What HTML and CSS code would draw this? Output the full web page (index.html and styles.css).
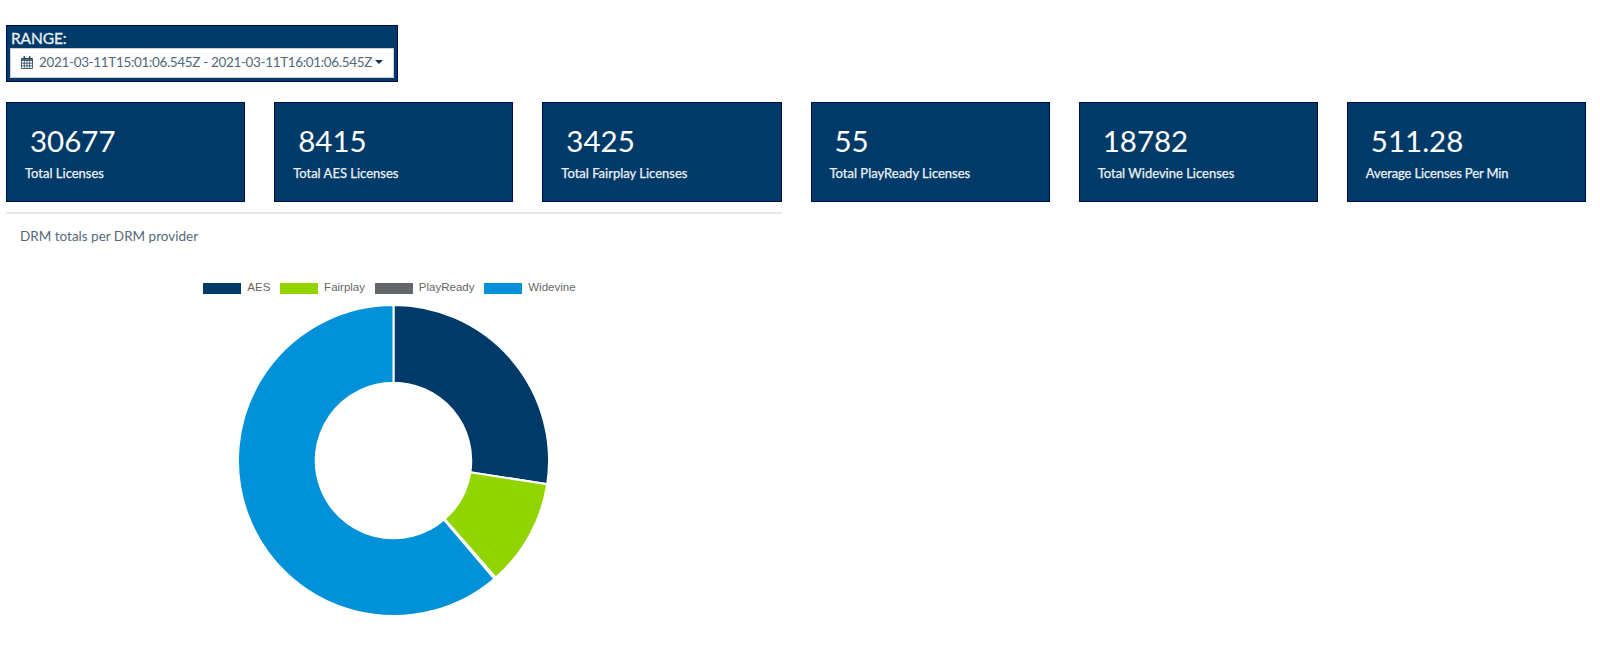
FILE: index.html
```html
<!DOCTYPE html>
<html lang="en">
<head>
<meta charset="utf-8">
<title>DRM licenses</title>
<link rel="stylesheet" href="styles.css">
</head>
<body>
<main class="dashboard">
  <section class="range">
    <label class="range-label">RANGE:</label>
    <div class="range-picker">
      <svg class="calendar" width="12" height="13" viewBox="0 0 12 13" fill="none" stroke="#24435c"><path d="M.5 2.5h11v10H.5zM.5 4.5h11M.5 7.2h11M.5 9.8h11M3.3 4.5v8M6 4.5v8M8.7 4.5v8" stroke-width=".8"/><path d="M.5 3h11" stroke-width="1.6"/><path d="M3.3 .3v3M8.7 .3v3" stroke-width="1.6"/></svg>
      <span class="range-text">2021-03-11T15:01:06.545Z - 2021-03-11T16:01:06.545Z</span>
      <span class="caret"></span>
    </div>
  </section>
  <section class="cards">
    <div class="card"><div class="value">30677</div><div class="label">Total Licenses</div></div>
    <div class="card"><div class="value">8415</div><div class="label">Total AES Licenses</div></div>
    <div class="card"><div class="value">3425</div><div class="label">Total Fairplay Licenses</div></div>
    <div class="card"><div class="value">55</div><div class="label">Total PlayReady Licenses</div></div>
    <div class="card"><div class="value">18782</div><div class="label">Total Widevine Licenses</div></div>
    <div class="card"><div class="value">511.28</div><div class="label tight">Average Licenses Per Min</div></div>
  </section>
  <section class="panel">
    <h2 class="panel-title">DRM totals per DRM provider</h2>
    <div class="legend">
      <span class="key"><i class="swatch aes"></i><span class="key-text">AES</span></span>
      <span class="key"><i class="swatch fairplay"></i><span class="key-text">Fairplay</span></span>
      <span class="key"><i class="swatch playready"></i><span class="key-text">PlayReady</span></span>
      <span class="key"><i class="swatch widevine"></i><span class="key-text">Widevine</span></span>
    </div>
    <svg class="donut" width="313" height="313" viewBox="-157 -157 314 314" stroke="#fff" stroke-width="2">
      <path fill="#003a69" d="M0-156A156 156 0 0 1 154.18 23.73L77.09 11.87A78 78 0 0 0 0-78Z"/>
      <path fill="#92d400" d="M154.18 23.73A156 156 0 0 1 102.47 117.63L51.23 58.81A78 78 0 0 0 77.09 11.87Z"/>
      <path fill="#63666a" d="M102.47 117.63A156 156 0 0 1 101.13 118.78L50.56 59.39A78 78 0 0 0 51.23 58.81Z"/>
      <path fill="#0091d8" d="M101.13 118.78A156 156 0 1 1 0-156L0-78A78 78 0 1 0 50.56 59.39Z"/>
    </svg>
  </section>
</main>
</body>
</html>
```
FILE: styles.css
```css
* { box-sizing: border-box; }
body { margin: 0; background: #fff; font-family: Lato, "Open Sans", sans-serif; }
.dashboard { padding: 25px 14px 0 6px; }
.range { width: 392px; height: 57px; padding: 3px 3px 0; background: #003a69; border: 1px solid #00094f; }
.range-label { display: block; height: 19px; padding-left: 1px; font-size: 15.5px; line-height: 18px; color: #e9eef2; -webkit-text-stroke: .3px #e9eef2; letter-spacing: -.1px; }
.range-picker { display: flex; align-items: center; width: 384px; height: 30px; padding: 0 10px; border: 1px solid #ccc; background: #fff; }
.calendar { flex: none; margin-top: -2px; }
.range-text { width: 336px; margin: -3px 0 0 6px; font-size: 13.5px; line-height: 20px; letter-spacing: -.34px; color: #53687a; white-space: nowrap; }
.caret { margin-top: -3px; border: 4px solid transparent; border-top-color: #12324e; border-bottom: 0; }
.cards { display: grid; grid-template-columns: repeat(6, 1fr); column-gap: 29px; margin-top: 20px; }
.card { height: 100px; padding: 19px 0 0 18px; background: #003a69; border: 1px solid #00094f; color: #fff; }
.value { padding-left: 5px; font-size: 29.5px; line-height: 38px; }
.label { margin-top: 4px; font-size: 13px; line-height: 18px; color: #edf1f4; -webkit-text-stroke: .25px #edf1f4; white-space: nowrap; }
.tight { letter-spacing: -.12px; }
.panel { display: flex; flex-direction: column; width: 776px; margin-top: 10px; border-top: 2px solid #e6e9ec; }
.panel-title { margin: 12px 0 0 14px; font-size: 13.5px; line-height: 20px; font-weight: 400; color: #53687a; }
.legend { display: flex; gap: 9.5px; margin: 34px 0 0 197px; font: 11.5px/14px "Liberation Sans", Arial, sans-serif; color: #666; }
.key { display: flex; align-items: center; gap: 6px; }
.swatch { width: 38.3px; height: 11px; margin-top: 2px; }
.aes { background: #003a69; }
.fairplay { background: #92d400; }
.playready { background: #63666a; }
.widevine { background: #0091d8; }
.donut { display: block; margin: 10px 0 0 231.3px; }
```
